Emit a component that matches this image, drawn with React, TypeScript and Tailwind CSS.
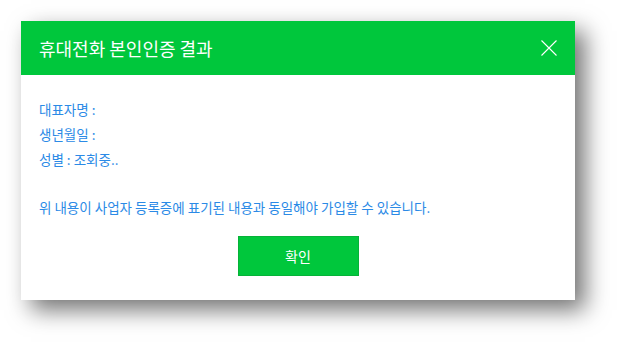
import React from "react";

export default function App() {
  return (
    <div className="w-[617px] h-[342px] bg-white pt-[21px] pl-[21px]" style={{ fontFamily: '"Noto Sans CJK KR", "Noto Sans", sans-serif' }}>
      <div className="w-[554px] h-[279px] bg-white flex flex-col shadow-[10px_10px_22px_rgba(0,0,0,0.55)]">
        <div className="h-[54px] bg-[#00c73c] flex items-center justify-between pl-[18px] pr-[18px]">
          <span className="text-white text-[18px] leading-none">휴대전화 본인인증 결과</span>
          <svg width="16" height="16" viewBox="0 0 16 16">
            <path d="M0.5 0.5 L15.5 15.5 M15.5 0.5 L0.5 15.5" stroke="#ffffff" strokeWidth="1.1" fill="none" />
          </svg>
        </div>
        <div className="flex flex-col px-[18px] pt-[22px] text-[13.5px] leading-[25px] text-[#2b8ae6]">
          <div>대표자명 :</div>
          <div>생년월일 :</div>
          <div>성별 : 조회중..</div>
          <div className="mt-[23px]">위 내용이 사업자 등록증에 표기된 내용과 동일해야 가입할 수 있습니다.</div>
          <div className="flex justify-center mt-[16px]">
            <button className="w-[121px] h-[40px] bg-[#00c73c] border border-[#06b238] text-white text-[14px]">확인</button>
          </div>
        </div>
      </div>
    </div>
  );
}
